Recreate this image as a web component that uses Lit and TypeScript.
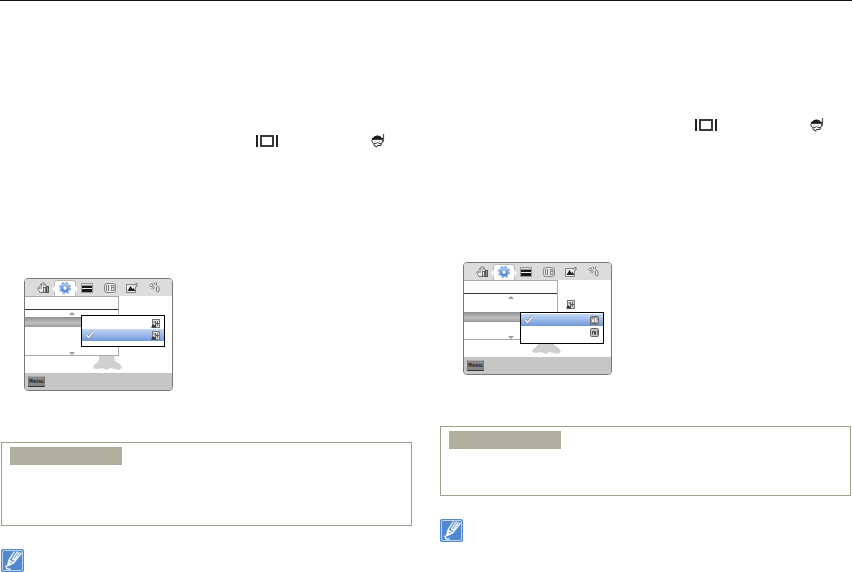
import { LitElement, html, css, svg, nothing } from "lit";
import { customElement, property, state } from "lit/decorators.js";
import { classMap } from "lit/directives/class-map.js";

const tabIcons = [
  { name: "Shooting", art: svg`
    <path d="M8 13.500 5.500 9.500q0-1.500 1.500-.5l1 1V6q.8-1.500 1.500 0V4.500q.8-1.200 1.600 0V4q1-1 1.600.5V6l1.300-.5v3" fill="#eee" stroke="#777" stroke-width=".9"/>
    <path d="M9.500 6v4M11.200 4.500V8" stroke="#888" stroke-width=".7"/>
    <path d="M7.500 13.500h9" stroke="#777"/>
    <rect x="11.500" y="8.500" width="2" height="5" fill="#eee" stroke="#666"/>
    <rect x="14.500" y="7.500" width="2" height="6" fill="#999" stroke="#555"/>` },
  { name: "Settings", art: svg`
    <circle cx="11" cy="9" r="5.400" stroke="#8db1e4" stroke-width="1.600" stroke-dasharray="2.400 1.840"/>
    <circle cx="11" cy="9" r="4.900" fill="#78a5e2"/>
    <circle cx="11" cy="8" r="3.600" fill="#a9c8f0"/>
    <circle cx="11" cy="9.500" r="3.100" fill="#4d82cf"/>
    <circle cx="11" cy="9" r="1.900" fill="#f4f8ff"/>` },
  { name: "Display", art: svg`
    <rect x="5" y="4" width="12" height="10" fill="#999"/>
    <rect x="6" y="5" width="10" height="1" fill="#ddd"/>
    <rect x="6" y="7" width="10" height="2" fill="#181818"/>
    <rect x="6" y="9" width="10" height="1" fill="#eee"/>
    <rect x="6" y="10" width="10" height="3" fill="#181818"/>` },
  { name: "Film", art: svg`
    <rect x="6.500" y="4.500" width="11" height="9" rx="2" fill="#e8e8e8" stroke="#888"/>
    <path d="M8.500 6v6M10.500 6v6" stroke="#777"/>
    <path d="M13 6.500h3M13 8.500h3M13 11.500h3M13.500 6v6M16 6v6" stroke="#888"/>` },
  { name: "Picture", art: svg`
    <rect x="6.500" y="5.500" width="9" height="8" fill="#e8e8e8" stroke="#888"/>
    <path d="m7.500 12 3-5 2 3 1-1 2 3z" fill="#222"/>
    <path d="m14 6 3-2v3l-2 2" fill="#ccc" stroke="#777"/>` },
  { name: "Sound", art: svg`
    <path d="M7.500 6.500 10 4.500l1 2-2 1.500zM12 3.500l1 2.500M9.500 10l2-2.500 1 1-1.500 2M14.500 3.500v3" fill="#eee" stroke="#777" stroke-width=".9"/>
    <path d="M14 8.500q2-2 3 0v3.500q-1.500 2.500-2.500 0v-3" fill="#eee" stroke="#777"/>` },
];

const glyphs: Record<string, unknown> = {
  frame: svg`
    <rect x="1.500" y=".5" width="7" height="8" fill="#ddd" stroke="#777"/>
    <path d="M0 8.500 2 5l1.500 1.500L5 4.500v4z" fill="#333"/>
    <path d="M4.500 2v5M6.500 2v5M4 4.500h4M2.500 3h1.500" stroke="#555" stroke-width=".9"/>`,
  fine: svg`
    <rect x=".5" y=".5" width="8" height="7" rx="1" fill="#999" stroke="#666"/>
    <path d="M0 8.500h9" stroke="#777"/>
    <path d="m2 3 1 3 1-3M7.200 2.500H5.500v3h1.700V4" stroke="#fff" stroke-width=".9"/>`,
  medium: svg`
    <rect x=".5" y=".5" width="8" height="8" rx="1" fill="#c4c4c4" stroke="#666"/>
    <path d="M2.500 6.500v-3h2v3M4.500 3.500h1v3" stroke="#444"/>
    <path d="M7.500 2v5" stroke="#777"/>`,
};

const glyph = (name: string) => html`<svg class="glyph" width="9" height="9" viewBox="0 0 9 9" fill="none" aria-hidden="true">${glyphs[name]}</svg>`;

@customElement("camera-screen")
export class CameraScreen extends LitElement {
  @property({ type: Number }) row = 0;
  @property({ type: Number }) chosen = 0;
  @property({ attribute: false }) options: string[] = [];
  @property() value = "";
  @state() private tab = 1;

  static styles = css`
    :host { display: block; width: 149px; }
    button { appearance: none; border: 0; margin: 0; padding: 0; background: none; font: inherit; }
    svg { display: block; }
    .screen { position: relative; border: 1px solid #777; border-radius: 4px; overflow: hidden; background: #fff; }
    .tabs { display: flex; height: 17px; padding-left: 7px; background: #dcdcdc; }
    .tab { width: 22px; height: 17px; flex: none; }
    .tab.on { margin-top: 1px; height: 16px; background: #fff; border: 1px solid #bbb; border-bottom: 0; border-radius: 3px 3px 0 0; box-sizing: border-box; position: relative; }
    .tab.on svg { margin: -2px -1px 0; }
    .tab.on::before, .tab.on::after { content: ""; position: absolute; top: 5px; border: 3px solid transparent; }
    .tab.on::before { right: 100%; border-right-color: #fff; }
    .tab.on::after { left: 100%; border-left-color: #fff; }
    .body { display: flex; height: 77px; }
    .panel { width: 94px; height: 60px; box-sizing: border-box; border: 1px solid #aaa; border-left: 0; display: flex; flex-direction: column; background: #fff; }
    .head { height: 12px; border-bottom: 1px solid #333; }
    .arrow { align-self: center; border: 3px solid transparent; }
    .up { border-top: 0; border-bottom-color: #999; margin-top: 2px; }
    .down { border-bottom: 0; border-top-color: #999; margin-top: auto; }
    .list { height: 33px; margin-top: 2px; }
    .item { height: 11px; }
    .item.on { height: 10px; background: linear-gradient(#909090, #c0c0c0 60%, #999); }
    .value { margin: 20px 0 0 8px; }
    .blob { position: absolute; left: 68px; top: 77px; }
    .popup { position: absolute; left: 56px; width: 84px; height: 32px; box-sizing: border-box; border: 1px solid #000; padding-top: 1px; background: #fff; display: flex; flex-direction: column; }
    .row0 { top: 36px; }
    .row1 { top: 49px; }
    .option { display: flex; align-items: center; height: 12px; padding: 0 4px 0 3px; }
    .option.on { background: linear-gradient(#c5d6f3, #a5c0ec 40%, #6d98dc); }
    .glyph { margin-left: auto; }
    .value .glyph { margin: 0; }
    .foot { height: 17px; box-sizing: border-box; background: #c6c6c6; padding: 3px; }
    .menu { display: block; width: 17px; height: 11px; background: #858585; border: 1px solid #777; border-top-color: #aaa; border-bottom-color: #333; color: #222; font: bold 6px/9px "Liberation Mono", monospace; }
  `;

  render() {
    return html`<div class="screen">
      <div class="tabs" role="tablist">
        ${tabIcons.map((t, i) => html`<button role="tab" aria-label=${t.name} aria-selected=${i === this.tab}
          class=${classMap({ tab: true, on: i === this.tab })} @click=${() => (this.tab = i)}>
          <svg width="22" height="17" viewBox="0 0 22 17" fill="none">${t.art}</svg></button>`)}
      </div>
      <div class="body">
        <div class="panel">
          <div class="head"></div>
          <div class="arrow up"></div>
          <div class="list">${[0, 1, 2].map((i) => html`<div class=${classMap({ item: true, on: i === this.row })}></div>`)}</div>
          <div class="arrow down"></div>
        </div>
        ${this.value ? html`<div class="value">${glyph(this.value)}</div>` : nothing}
      </div>
      <div class="foot"><button class="menu">Menu</button></div>
      <svg class="blob" width="30" height="15" viewBox="0 0 30 15" aria-hidden="true">
        <path d="M6 0h15l1 5 5 3 2 4-3 2-9-2-3 2-5-2-5 1-4-1 1-3 3-2 2-3z" fill="#d0d0d0"/>
      </svg>
      <div class="popup row${this.row}">
        ${this.options.map((o, i) => html`<button aria-label=${o} class=${classMap({ option: true, on: i === this.chosen })} @click=${() => (this.chosen = i)}>
          ${i === this.chosen ? html`<svg width="10" height="8" viewBox="0 0 10 8" aria-hidden="true">
            <path d="m1.500 4 2 2.500L8.500 1" fill="none" stroke="#777" stroke-width="2.400"/>
            <path d="m1.500 4 2 2.500L8.500 1" fill="none" stroke="#fff" stroke-width="1.300"/></svg>` : nothing}
          ${glyph(o)}</button>`)}
      </div>
    </div>`;
  }
}

@customElement("app-root")
export class AppRoot extends LitElement {
  static styles = css`
    :host { display: block; background: #fff; font-family: "Liberation Sans", sans-serif; }
    svg { display: block; }
    .page { border-top: 1px solid #111; display: grid; grid-template-columns: 1fr 1fr; column-gap: 28px; padding: 0 1px; align-items: start; }
    .column { padding-top: 117px; }
    .column.first { padding-top: 133px; }
    .modes { display: flex; align-items: center; gap: 93px; padding-left: 255px; margin-bottom: 130px; }
    camera-screen { margin: 0 0 51px 23px; }
    .box { box-sizing: border-box; min-height: 70px; border: 1px solid #a09f8b; padding: 4px 8px; margin-bottom: 23px; }
    .first .box { min-height: 84px; }
    .label { width: 112px; height: 18px; background: #b0af9e; }
  `;

  private column(first: boolean) {
    return html`<section class=${classMap({ column: true, first })}>
      <div class="modes">
        <svg width="22" height="14" viewBox="0 0 22 14" aria-hidden="true">
          <path d="M1 1v12M21 1v12" stroke="#222" stroke-width="2"/>
          <rect x="5" y="2" width="12" height="10" fill="none" stroke="#3a3a3a" stroke-width="2"/>
        </svg>
        <svg width="14" height="14" viewBox="0 0 14 14" fill="none" aria-hidden="true">
          <path d="M2 4Q3 1.500 6.500 1.500T10.500 4z" fill="#1d1a1b"/>
          <path d="M12.500 0v6.500q0 1.500-1.500 2" stroke="#555" stroke-width="1.200"/>
          <path d="M1 5.500h10.500v2q0 2.200-2.500 2.200-1 0-2.500-1.200Q5 9.700 4 9.700 1 9.500 1 7.300z" fill="#fff" stroke="#444" stroke-width="1"/>
          <path d="M1 4.500h11" stroke="#1d1a1b" stroke-width="1.300"/>
          <path d="M3.500 7.500h1M8 7.500h1" stroke="#999"/>
          <path d="M2.500 10.200q1.500 2.300 4 2.800M6 11.500h3.500l1.500-2" stroke="#333" stroke-width="1.100"/>
        </svg>
      </div>
      ${first
        ? html`<camera-screen .row=${0} .chosen=${1} .options=${["frame", "frame"]}></camera-screen>`
        : html`<camera-screen .row=${1} .chosen=${0} .options=${["fine", "medium"]} .value=${"frame"}></camera-screen>`}
      <div class="box"><div class="label"></div></div>
      <svg width="23" height="23" viewBox="0 0 23 23" fill="none" aria-hidden="true">
        <rect width="23" height="23" rx="2" fill="#5189d0"/>
        <rect x="1.500" y="1.500" width="20" height="20" rx="1.500" stroke="#bdd2ee"/>
        <path d="M6.500 17 8 11l5.500-8.500M6.500 17l6-3 8-10M8 11l4.500 3M16.500 2.500 11.500 10q.5 1.500 2 .5L18.500 3" stroke="#fff" stroke-width="1.300"/>
        <path d="M8 12.500 6.500 17l4-2z" fill="#fff"/>
        <path d="M4 17.500q2-1 1.500 1t4 1.500" stroke="#fff" stroke-width="1.300"/>
      </svg>
    </section>`;
  }

  render() {
    return html`<main class="page">${this.column(true)}${this.column(false)}</main>`;
  }
}
